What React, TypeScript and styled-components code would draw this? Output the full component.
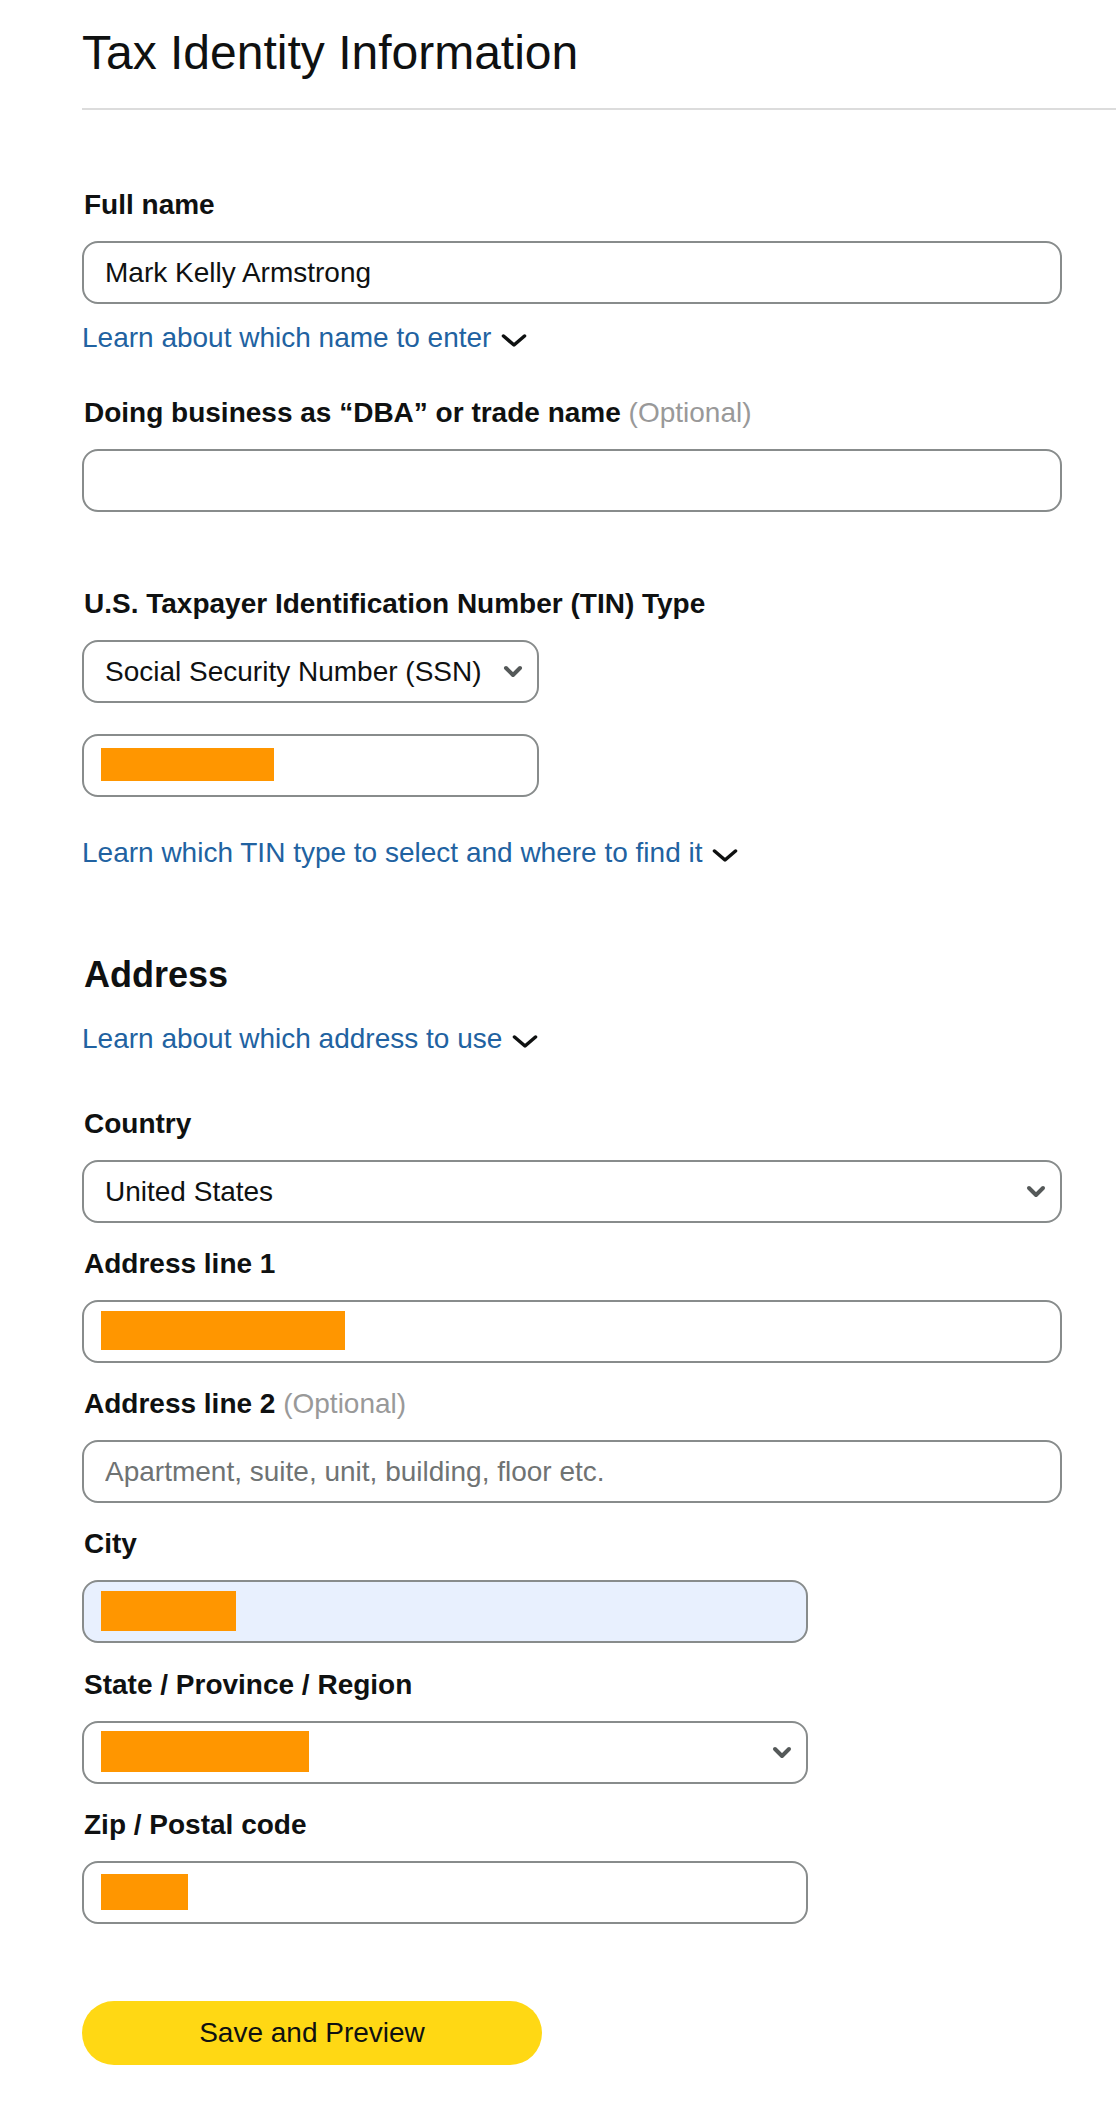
import styled, { createGlobalStyle, css } from 'styled-components'

const GlobalStyle = createGlobalStyle`
  body {
    margin: 0;
    background: #fff;
    color: #0f1111;
    font-family: "Liberation Sans", Arial, sans-serif;
  }
`

const Page = styled.div`
  padding-left: 82px;
  padding-bottom: 39px;
`

const Header = styled.div`
  padding: 25px 0 27px;
  border-bottom: 2px solid #dcdcdc;
`

const Title = styled.h1`
  margin: 0;
  font-size: 48px;
  font-weight: 400;
  line-height: 56px;
`

const Form = styled.form`
  display: flex;
  flex-direction: column;
  width: 980px;
`

const Field = styled.div<{ $mt: number }>`
  display: flex;
  flex-direction: column;
  gap: 20px;
  margin-top: ${({ $mt }) => $mt}px;
`

const Label = styled.label`
  padding-left: 2px;
  font-size: 28px;
  font-weight: 700;
  line-height: 32px;
`

const Optional = styled.span`
  font-weight: 400;
  color: #999;
`

const boxBase = css<{ $w: number; $bg?: string }>`
  box-sizing: border-box;
  width: ${({ $w }) => $w}px;
  height: 63px;
  border: 2px solid #888c8c;
  border-radius: 16px;
  padding: 0 21px;
  background: ${({ $bg }) => $bg || '#fff'};
  font-family: inherit;
  font-size: 28px;
  color: #0f1111;
`

const TextInput = styled.input<{ $w: number; $bg?: string }>`
  ${boxBase}
  display: block;
  outline: none;

  &::placeholder {
    color: #6f7373;
  }
`

const FilledBox = styled.div<{ $w: number; $bg?: string }>`
  ${boxBase}
  display: flex;
  align-items: center;
`

const SelectBox = styled.div<{ $w: number; $bg?: string }>`
  ${boxBase}
  display: flex;
  align-items: center;
  justify-content: space-between;
  padding-right: 14px;
`

const Redaction = styled.span<{ $w: number; $h: number }>`
  display: block;
  width: ${({ $w }) => $w}px;
  height: ${({ $h }) => $h}px;
  margin: -2px 0 0 -4px;
  background: #ff9600;
`

const HelpRow = styled.div<{ $mt: number }>`
  margin-top: ${({ $mt }) => $mt}px;
  font-size: 28px;
  line-height: 32px;
`

const HelpLink = styled.a`
  color: #2162a1;
  text-decoration: none;
`

const CaretSvg = styled.svg`
  margin-left: 10px;
  vertical-align: baseline;
`

const SectionTitle = styled.h2<{ $mt: number }>`
  margin: ${({ $mt }) => $mt}px 0 0;
  padding-left: 2px;
  font-size: 36px;
  font-weight: 700;
  line-height: 40px;
`

const SaveButton = styled.button`
  width: 460px;
  height: 64px;
  margin-top: 77px;
  border: none;
  border-radius: 32px;
  background: #ffd814;
  color: #0f1111;
  font-family: inherit;
  font-size: 28px;
  cursor: pointer;
`

const Caret = () => (
  <CaretSvg width="26" height="15" viewBox="0 0 26 15">
    <path d="M2.5 4 L13 13 L23.5 4" fill="none" stroke="#0f1111" strokeWidth="3.5" strokeLinecap="round" strokeLinejoin="round" />
  </CaretSvg>
)

const SelectArrow = () => (
  <svg width="20" height="13" viewBox="0 0 20 13">
    <path d="M3 3 L10 10 L17 3" fill="none" stroke="#555959" strokeWidth="4" strokeLinecap="round" strokeLinejoin="round" />
  </svg>
)

const Help = ({ mt, text }: { mt: number; text: string }) => (
  <HelpRow $mt={mt}>
    <HelpLink href="#">{text}</HelpLink>
    <Caret />
  </HelpRow>
)

export default function App() {
  return (
    <Page>
      <GlobalStyle />
      <Header>
        <Title>Tax Identity Information</Title>
      </Header>
      <Form onSubmit={(e) => e.preventDefault()}>
        <Field $mt={79}>
          <Label>Full name</Label>
          <TextInput $w={980} defaultValue="Mark Kelly Armstrong" />
        </Field>
        <Help mt={18} text="Learn about which name to enter" />

        <Field $mt={43}>
          <Label>
            Doing business as “DBA” or trade name <Optional>(Optional)</Optional>
          </Label>
          <TextInput $w={980} />
        </Field>

        <Field $mt={76}>
          <Label>U.S. Taxpayer Identification Number (TIN) Type</Label>
          <SelectBox $w={457}>
            <span>Social Security Number (SSN)</span>
            <SelectArrow />
          </SelectBox>
        </Field>
        <Field $mt={31}>
          <FilledBox $w={457}>
            <Redaction $w={173} $h={33} />
          </FilledBox>
        </Field>
        <Help mt={40} text="Learn which TIN type to select and where to find it" />

        <SectionTitle $mt={86}>Address</SectionTitle>
        <Help mt={28} text="Learn about which address to use" />

        <Field $mt={53}>
          <Label>Country</Label>
          <SelectBox $w={980}>
            <span>United States</span>
            <SelectArrow />
          </SelectBox>
        </Field>

        <Field $mt={25}>
          <Label>Address line 1</Label>
          <FilledBox $w={980}>
            <Redaction $w={244} $h={39} />
          </FilledBox>
        </Field>

        <Field $mt={25}>
          <Label>
            Address line 2 <Optional>(Optional)</Optional>
          </Label>
          <TextInput $w={980} placeholder="Apartment, suite, unit, building, floor etc." />
        </Field>

        <Field $mt={25}>
          <Label>City</Label>
          <FilledBox $w={726} $bg="#e8f0fe">
            <Redaction $w={135} $h={40} />
          </FilledBox>
        </Field>

        <Field $mt={26}>
          <Label>State / Province / Region</Label>
          <SelectBox $w={726}>
            <Redaction $w={208} $h={41} />
            <SelectArrow />
          </SelectBox>
        </Field>

        <Field $mt={25}>
          <Label>Zip / Postal code</Label>
          <FilledBox $w={726}>
            <Redaction $w={87} $h={36} />
          </FilledBox>
        </Field>

        <div>
          <SaveButton type="submit">Save and Preview</SaveButton>
        </div>
      </Form>
    </Page>
  )
}
